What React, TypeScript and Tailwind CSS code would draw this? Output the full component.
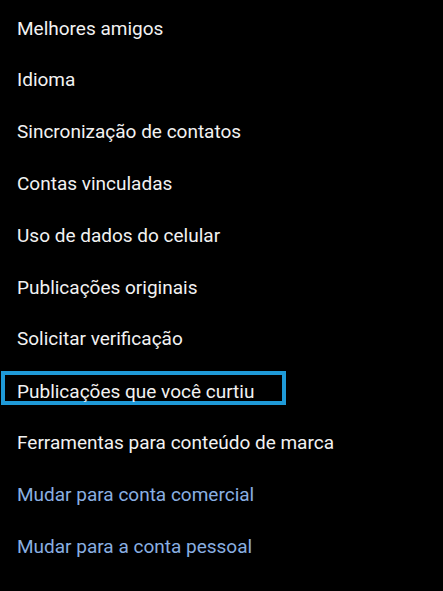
const items: { label: string; link?: boolean; highlight?: boolean }[] = [
  { label: "Melhores amigos" },
  { label: "Idioma" },
  { label: "Sincronização de contatos" },
  { label: "Contas vinculadas" },
  { label: "Uso de dados do celular" },
  { label: "Publicações originais" },
  { label: "Solicitar verificação" },
  { label: "Publicações que você curtiu", highlight: true },
  { label: "Ferramentas para conteúdo de marca" },
  { label: "Mudar para conta comercial", link: true },
  { label: "Mudar para a conta pessoal", link: true },
];

export default function App() {
  return (
    <div
      className="w-[443px] h-[591px] bg-black overflow-hidden pt-[3px]"
      style={{ fontFamily: "Roboto, 'Noto Sans', sans-serif" }}
    >
      {items.map((item) => (
        <div
          key={item.label}
          className={`h-[51.8px] flex items-center px-[17px] text-[19px] ${
            item.link ? "text-[#89afe2]" : "text-[#f2f2f2]"
          }`}
        >
          {item.highlight ? (
            <span className="-ml-[16px] w-[285px] h-[34px] -mt-[6px] border-4 border-[#1f9ad8] pl-[12px] flex items-center pt-[7px] shrink-0">
              {item.label}
            </span>
          ) : (
            <span>{item.label}</span>
          )}
        </div>
      ))}
    </div>
  );
}
